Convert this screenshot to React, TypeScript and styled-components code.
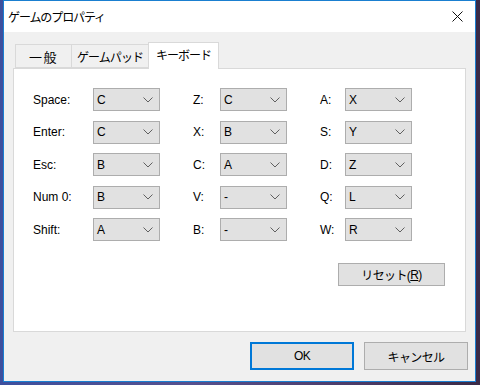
import React from "react";
import styled, { createGlobalStyle } from "styled-components";

const GlobalStyle = createGlobalStyle`
  html, body {
    margin: 0;
    padding: 0;
    width: 480px;
    height: 385px;
    overflow: hidden;
    background: linear-gradient(90deg, #3d4f9e 0%, #55508e 40%, #4a3a66 75%, #3a2a46 100%);
    font-family: "Liberation Sans", "Noto Sans CJK JP", sans-serif;
    font-size: 12px;
    color: #000;
  }
  * { box-sizing: border-box; }
`;

const Window = styled.div`
  margin-left: 3px;
  width: 473px;
  height: 382px;
  border: 1px solid #1a7fd0;
  background: #f0f0f0;
  display: flex;
  flex-direction: column;
`;

const TitleBar = styled.div`
  height: 31px;
  background: #fff;
  display: flex;
  align-items: center;
  justify-content: space-between;
  padding-left: 4px;
`;

const Title = styled.span`
  font-family: "Noto Sans CJK JP", sans-serif;
  font-size: 12px;
  letter-spacing: -1.1px;
  color: #000;
`;

const CloseBox = styled.div`
  width: 36px;
  height: 31px;
  display: flex;
  align-items: center;
  justify-content: center;
`;

const Body = styled.div`
  flex: 1;
  display: flex;
  flex-direction: column;
  padding: 10px 9px 11px 9px;
`;

const TabStrip = styled.div`
  height: 26px;
  display: flex;
  align-items: flex-end;
  padding-left: 2px;
`;

const Tab = styled.div<{ $active?: boolean; $w: number; $kanji?: boolean }>`
  position: relative;
  z-index: ${(p) => (p.$active ? 2 : 1)};
  width: ${(p) => p.$w}px;
  height: ${(p) => (p.$active ? 27 : 24)}px;
  margin-bottom: ${(p) => (p.$active ? -1 : 0)}px;
  margin-left: -1px;
  padding-bottom: ${(p) => (p.$active ? 3 : 0)}px;
  border: 1px solid #d9d9d9;
  border-bottom: ${(p) => (p.$active ? "none" : "1px solid #d9d9d9")};
  background: ${(p) => (p.$active ? "#fff" : "#f0f0f0")};
  display: flex;
  align-items: center;
  justify-content: center;
  font-family: "Noto Sans CJK JP", sans-serif;
  font-size: ${(p) => (p.$kanji ? 13 : 12)}px;
  letter-spacing: ${(p) => (p.$kanji ? "1.5px" : p.$active ? "-1px" : "-0.9px")};
  &:first-child { margin-left: 0; }
`;

const Panel = styled.div`
  height: 264px;
  background: #fff;
  border: 1px solid #d9d9d9;
  padding: 19px 20px 0 19px;
  display: flex;
  flex-direction: column;
`;

const Columns = styled.div`
  display: flex;
  gap: 33px;
`;

const Column = styled.div`
  display: flex;
  flex-direction: column;
  gap: 9.5px;
`;

const Row = styled.div`
  display: flex;
  align-items: center;
  height: 23px;
`;

const Label = styled.span<{ $w: number }>`
  width: ${(p) => p.$w}px;
  font-size: 12px;
  color: #000;
  white-space: nowrap;
`;

const SelectBox = styled.div`
  width: 67px;
  height: 23px;
  border: 1px solid #adadad;
  background: #e1e1e1;
  display: flex;
  align-items: center;
  justify-content: space-between;
  padding: 0 6px 0 3px;
  font-size: 12px;
`;

const ResetRow = styled.div`
  display: flex;
  justify-content: flex-end;
  margin-top: 22px;
`;

const Button = styled.div<{ $w: number; $h: number; $default?: boolean }>`
  width: ${(p) => p.$w}px;
  height: ${(p) => p.$h}px;
  background: #e1e1e1;
  border: 1px solid ${(p) => (p.$default ? "#0078d7" : "#adadad")};
  box-shadow: ${(p) => (p.$default ? "inset 0 0 0 1px #0078d7" : "none")};
  display: flex;
  align-items: center;
  justify-content: center;
  font-family: "Liberation Sans", "Noto Sans CJK JP", sans-serif;
  font-size: 12px;
  letter-spacing: -0.6px;
`;

const ButtonRow = styled.div`
  display: flex;
  justify-content: flex-end;
  gap: 10px;
  margin-top: 10px;
  margin-right: -2px;
`;

const Chevron = () => (
  <svg width="10" height="6" viewBox="0 0 10 6">
    <path d="M0.5 0.5 L5 5 L9.5 0.5" fill="none" stroke="#606060" strokeWidth="1" />
  </svg>
);

const CloseIcon = () => (
  <svg width="11" height="11" viewBox="0 0 11 11">
    <path d="M0.5 0.5 L10.5 10.5 M10.5 0.5 L0.5 10.5" stroke="#111" strokeWidth="1" />
  </svg>
);

type Field = [string, string];

const columns: { labelW: number; w: number; fields: Field[] }[] = [
  {
    labelW: 60,
    w: 127,
    fields: [
      ["Space:", "C"],
      ["Enter:", "C"],
      ["Esc:", "B"],
      ["Num 0:", "B"],
      ["Shift:", "A"],
    ],
  },
  {
    labelW: 27,
    w: 94,
    fields: [
      ["Z:", "C"],
      ["X:", "B"],
      ["C:", "A"],
      ["V:", "-"],
      ["B:", "-"],
    ],
  },
  {
    labelW: 25,
    w: 92,
    fields: [
      ["A:", "X"],
      ["S:", "Y"],
      ["D:", "Z"],
      ["Q:", "L"],
      ["W:", "R"],
    ],
  },
];

export default function App() {
  return (
    <>
      <GlobalStyle />
      <Window>
        <TitleBar>
          <Title>ゲームのプロパティ</Title>
          <CloseBox>
            <CloseIcon />
          </CloseBox>
        </TitleBar>
        <Body>
          <TabStrip>
            <Tab $w={57} $kanji>
              一般
            </Tab>
            <Tab $w={78}>ゲームパッド</Tab>
            <Tab $w={71} $active>
              キーボード
            </Tab>
          </TabStrip>
          <Panel>
            <Columns>
              {columns.map((col, ci) => (
                <Column key={ci} style={{ width: col.w }}>
                  {col.fields.map(([label, value]) => (
                    <Row key={label}>
                      <Label $w={col.labelW}>{label}</Label>
                      <SelectBox>
                        <span>{value}</span>
                        <Chevron />
                      </SelectBox>
                    </Row>
                  ))}
                </Column>
              ))}
            </Columns>
            <ResetRow>
              <Button $w={107} $h={23}>
                リセット(<u>R</u>)
              </Button>
            </ResetRow>
          </Panel>
          <ButtonRow>
            <Button $w={104} $h={28} $default>
              OK
            </Button>
            <Button $w={104} $h={28}>
              キャンセル
            </Button>
          </ButtonRow>
        </Body>
      </Window>
    </>
  );
}
